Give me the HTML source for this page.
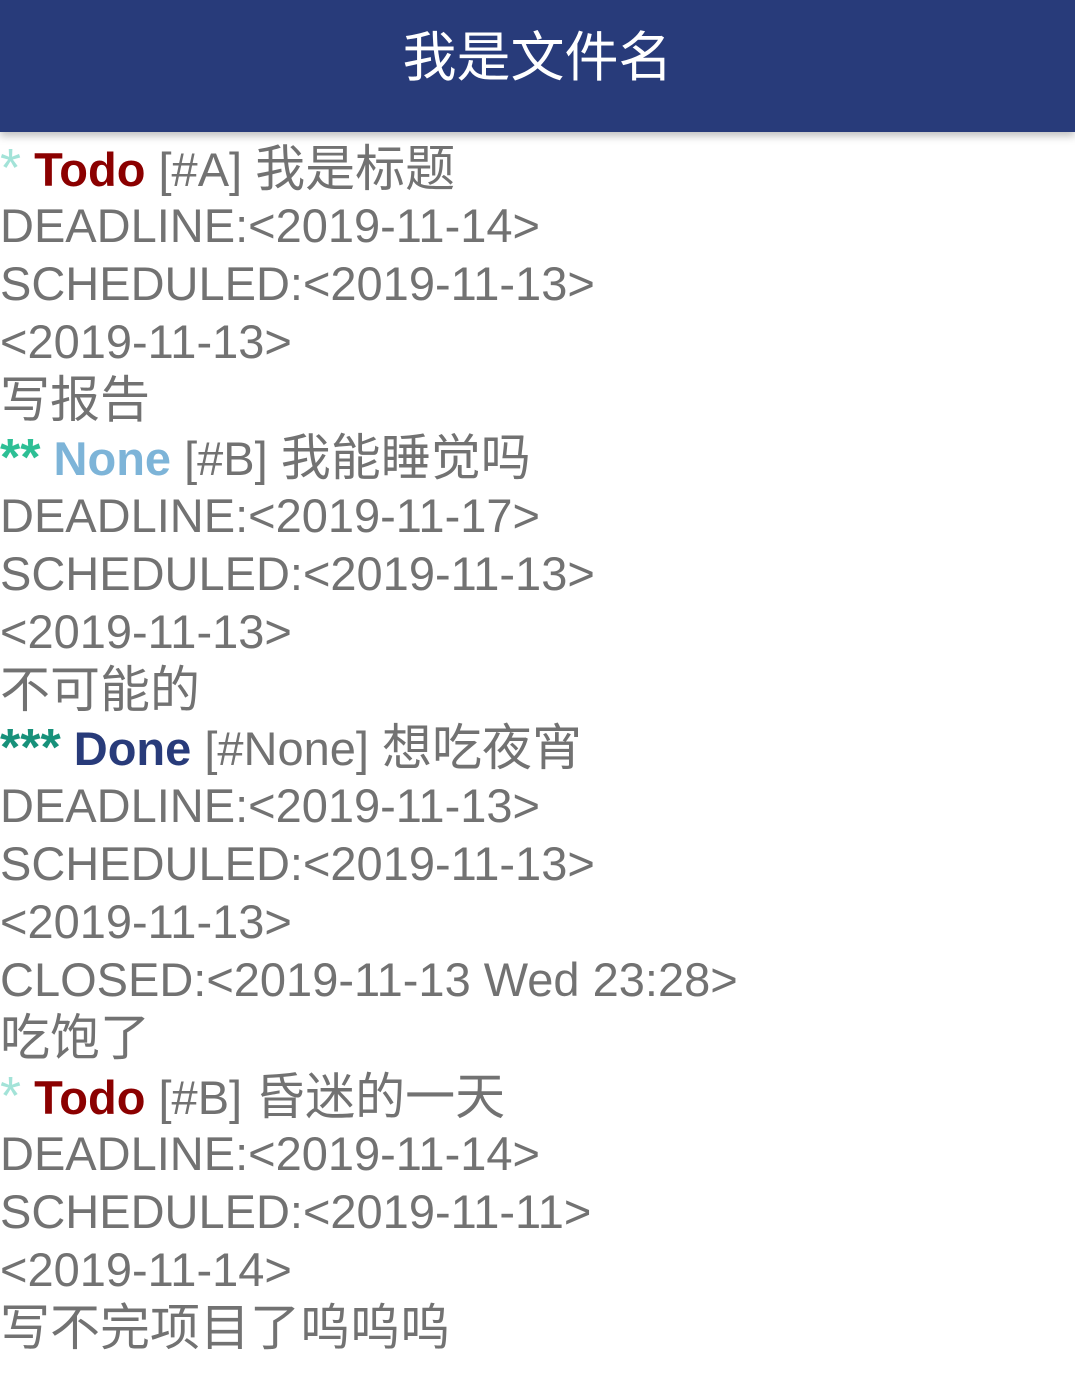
<!DOCTYPE html>
<html><head><meta charset="utf-8"><style>
body{margin:0;width:1075px;height:1376px;background:#fff;overflow:hidden;font-family:"Liberation Sans","Noto Sans CJK SC",sans-serif;}
.hd{height:132px;background:#283b7a;color:#fff;font-size:54px;text-align:center;line-height:116px;box-shadow:0 4px 8px rgba(0,0,0,.25);position:relative;}
.c{padding-top:139px;position:absolute;top:0;left:0;}
.l{font-size:47px;line-height:58px;height:58px;color:#727272;white-space:nowrap;}
.z{font-size:50px;}
b{font-weight:bold}
.s1{color:#a3e3d8;font-size:54px}.s2{color:#2dbf95;font-size:52px}.s3{color:#17917a;font-size:52px}
.t{color:#8b0000}.n{color:#7db4d8}.d{color:#283b7a}
</style></head><body>
<div class="hd">我是文件名</div>
<div class="c">
<div class="l"><span class="s1">*</span> <b class="t">Todo</b> [#A] <span class="z">我是标题</span></div>
<div class="l">DEADLINE:&lt;2019-11-14&gt;</div>
<div class="l">SCHEDULED:&lt;2019-11-13&gt;</div>
<div class="l">&lt;2019-11-13&gt;</div>
<div class="l"><span class="z">写报告</span></div>
<div class="l"><b class="s2">**</b> <b class="n">None</b> [#B] <span class="z">我能睡觉吗</span></div>
<div class="l">DEADLINE:&lt;2019-11-17&gt;</div>
<div class="l">SCHEDULED:&lt;2019-11-13&gt;</div>
<div class="l">&lt;2019-11-13&gt;</div>
<div class="l"><span class="z">不可能的</span></div>
<div class="l"><b class="s3">***</b> <b class="d">Done</b> [#None] <span class="z">想吃夜宵</span></div>
<div class="l">DEADLINE:&lt;2019-11-13&gt;</div>
<div class="l">SCHEDULED:&lt;2019-11-13&gt;</div>
<div class="l">&lt;2019-11-13&gt;</div>
<div class="l">CLOSED:&lt;2019-11-13 Wed 23:28&gt;</div>
<div class="l"><span class="z">吃饱了</span></div>
<div class="l"><span class="s1">*</span> <b class="t">Todo</b> [#B] <span class="z">昏迷的一天</span></div>
<div class="l">DEADLINE:&lt;2019-11-14&gt;</div>
<div class="l">SCHEDULED:&lt;2019-11-11&gt;</div>
<div class="l">&lt;2019-11-14&gt;</div>
<div class="l"><span class="z">写不完项目了呜呜呜</span></div>
</div>
</body></html>
